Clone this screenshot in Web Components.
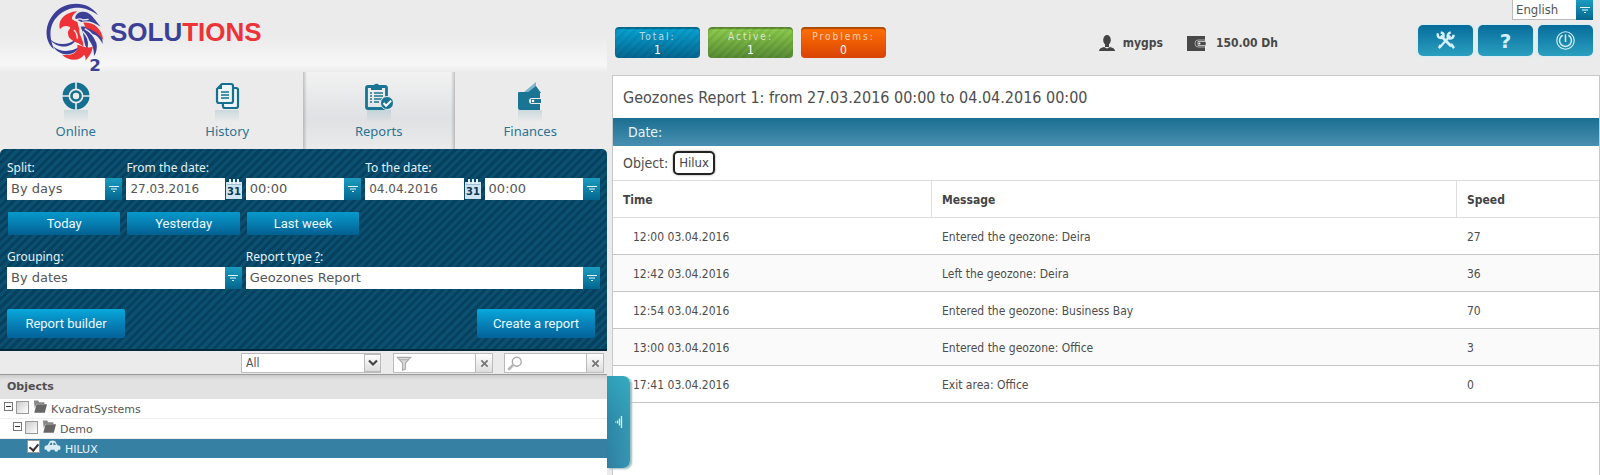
<!DOCTYPE html>
<html lang="en">
<head>
<meta charset="utf-8">
<title>Geozones Report</title>
<style>
html,body{margin:0;min-height:100%}
body{background:#ebebeb;font:12px/16px "DejaVu Sans Condensed","DejaVu Sans",sans-serif;color:#4d4d4d;
--label:"Noto Sans",sans-serif;--wide:"DejaVu Sans",sans-serif;--button:Roboto,sans-serif}
</style>
</head>
<body>
<tracker-app></tracker-app>
<script>
function define(name, html, setup) {
  const tpl = document.createElement('template');
  tpl.innerHTML = '<style>*{box-sizing:border-box}:host{box-sizing:border-box}</style>' + html;
  customElements.define(name, class extends HTMLElement {
    connectedCallback() {
      if (this.shadowRoot) return;
      this.attachShadow({mode: 'open'}).append(tpl.content.cloneNode(true));
      if (setup) setup(this, this.shadowRoot);
    }
  });
}

const ICONS = {
  online: ['0 0 28 28', '<g fill="none" stroke="#16708f"><circle cx="14" cy="14" r="10.5" stroke-width="6"/><circle cx="14" cy="14" r="4.5" stroke-width="2.6"/></g><path d="M14 0v8M14 20v8M0 14h8M20 14h8" stroke="#ebebeb" stroke-width="1.6"/>'],
  history: ['0 0 28 28', '<g fill="#eef6f8" stroke="#16708f" stroke-width="2.2" stroke-linejoin="round"><path d="M9 6h14q2 0 2 2v16q0 2-2 2H12q-2 0-2-2z"/><path d="M9 2h9q2 0 2 2v15q0 2-2 2H6q-2 0-2-2V7z"/></g><path d="M4 7h5V2" fill="#16708f"/><path d="M8 10h8M8 13h8M8 16h8" stroke="#16708f" stroke-width="1.6"/>'],
  reports: ['0 0 28 28', '<rect x="1.5" y="4.5" width="20" height="22" rx="1.5" fill="none" stroke="#1a7493" stroke-width="2.8"/><path d="M6 3h3a3 3 0 0 1 5 0h3v5H6z" fill="#1a7493"/><path d="M5 11h2M9 11h9M5 14h2M9 14h9M5 17h2M9 17h8M5 20h2M9 20h5" stroke="#1a7493" stroke-width="1.5"/><circle cx="22" cy="21" r="6.5" fill="#1a7493" stroke="#e7e9eb"/><path d="M18.5 21l2.6 2.7 5-5" fill="none" stroke="#fff" stroke-width="2"/>'],
  finances: ['0 0 28 28', '<path d="M8 10L20 0v10z" fill="#7fb3c9"/><path d="M11 11l9-7 5 7z" fill="#1a7493"/><path d="M3 10h21v6h-8q-3 0-3 3t3 3h8v6H4q-2 0-2-2V11q0-1 1-1z" fill="#1a7493"/><path d="M15 17h10v4H15z" fill="#1a7493"/><circle cx="17" cy="19" r="1.3" fill="#fff"/>'],
  calendar: ['0 0 16 21', '<path d="M0 4h16v17H0z" fill="#cfe4f0"/><path d="M4 1v5M8 1v5M12 1v5" stroke="#e8f4fa" stroke-width="2"/><path d="M1 6.5h14" stroke="#9cc0d4"/><text x="8" y="17" font-family="DejaVu Sans" font-weight="bold" font-size="10" text-anchor="middle" fill="#0c3a52">31</text>'],
  arrow: ['0 0 12 8', '<path d="M1 1.5h10M3 4h6M5 6.5h2" stroke="#e6f8ff" stroke-width="1.2"/>'],
  chevron: ['0 0 12 8', '<path d="M2 1.5l4 4 4-4" fill="none" stroke="#444" stroke-width="2.2"/>'],
  cross: ['0 0 10 10', '<path d="M1.5 1.5l7 7M8.5 1.5l-7 7" stroke="#777" stroke-width="2"/>'],
  filter: ['0 0 16 16', '<path d="M1 1.5h14l-5.5 6V14l-3 1V7.5z" fill="#ddd" stroke="#aaa" stroke-width="1.3"/><path d="M3 4h10" stroke="#aaa"/>'],
  search: ['0 0 18 16', '<circle cx="11" cy="6" r="5" fill="#fff" stroke="#aaa" stroke-width="1.6"/><path d="M7 9.5L1.5 15" stroke="#b5b5b5" stroke-width="3"/>'],
  folder: ['0 0 16 14', '<path d="M1 0h5l1 2h6v2H4L2 9z" fill="#888"/><path d="M4 4.5h12L13.5 14H1.5z" fill="#666"/>'],
  car: ['0 0 18 12', '<path d="M1 6l3-1 2-4q3-1.5 6 0l2 4 3 1q1 2 0 4h-2a2 2 0 0 1-4 0H7a2 2 0 0 1-4 0H1q-1-2 0-4z" fill="#d7ecf4"/><path d="M6 5l1-2.5h1.5V5zM10 5V2.5h1.5L12.5 5z" fill="#3580a3"/>'],
  user: ['0 0 16 16', '<ellipse cx="8" cy="5" rx="3.8" ry="5" fill="#444"/><path d="M6 9h4v3H6z" fill="#444"/><path d="M0 16q0-3 5-4l3 1.5L11 12q5 1 5 4z" fill="#444"/>'],
  purse: ['0 0 19 15', '<path d="M0 0h18v15H0z" fill="#484848"/><path d="M18 4h-7q-3 0-3 3.5T11 11h7" fill="none" stroke="#aaa"/><path d="M11 5.5h8v4h-8z" fill="#484848" stroke="#ddd" stroke-width=".8"/><circle cx="12.5" cy="7.5" r="1" fill="#fff"/>'],
  tools: ['0 0 20 20', '<g stroke="#d5f0fa" fill="none"><path d="M5 5l11 11" stroke-width="3"/><path d="M15 5L4 17" stroke-width="2.4"/><path d="M2 2.5q-1 4.5 3 5 3 0 3-3Q8 2 5 1.5" stroke-width="2.6"/><path d="M18.5 4q0 4-4 4-3-1-2-4 1-2 3-2.5" stroke-width="2.6"/></g><path d="M2 17l2-3 2 2-2 3zM14 14l3-1 3 4-2 2z" fill="#d5f0fa"/>'],
  power: ['0 0 20 20', '<circle cx="10" cy="10" r="9.2" fill="none" stroke="#d5f0fa" stroke-width="1.2"/><path d="M7 4.5a6.3 6.3 0 1 0 6 0M10 3.5v8" fill="none" stroke="#d5f0fa" stroke-width="1.6"/>'],
  handle: ['0 0 8 14', '<path d="M.5 6.5v1M2.5 5.5v3M4.5 3.5v7M6.5 1v12" stroke="#d9f2f8" stroke-width="1.3"/>']
};
define('ui-icon', '<style>:host{display:inline-block;flex:none}svg{display:block;width:100%;height:100%}</style><svg aria-hidden="true"></svg>', (el, r) => {
  const i = ICONS[el.getAttribute('name')], svg = r.querySelector('svg');
  svg.setAttribute('viewBox', i[0]);
  svg.innerHTML = i[1];
});

/* Puts the named icon in place of the component's <i data-icon> marker. */
function placeIcon(root, name) {
  const mark = root.querySelector('[data-icon]'), icon = document.createElement('ui-icon');
  icon.className = mark.className;
  icon.setAttribute('name', name);
  mark.replaceWith(icon);
}

define('brand-logo', `<style>
:host{display:flex;height:72px;padding-left:40px;background:linear-gradient(#ebebeb 50%,#f7f7f7 90%,#ececec)}
svg{width:70px;height:76px;flex:none}
strong{font:bold 26px/64px "Liberation Sans",sans-serif;color:#3b3f98}
em{font-style:normal;color:#ee3338}
</style>
<svg viewBox="0 0 210 228" role="img" aria-label="O2">
<g fill="#3b3f98">
<path d="M174 46C146 0 78 2 44 38C10 76 14 124 42 148C28 112 24 76 56 46C88 16 136 16 174 46Z"/>
<path d="M28 116C48 136 84 138 110 116C98 144 52 150 28 116Z"/>
<path d="M38 138C60 158 94 156 116 142C104 170 60 172 38 138Z"/>
<path d="M106 56C104 34 138 26 156 48L182 80C162 66 142 60 124 66Z"/>
<path d="M122 80C162 76 190 100 188 132C176 108 166 104 156 102C172 122 176 148 162 168C162 142 154 126 142 118C146 132 142 140 144 148C128 134 136 108 122 80Z"/>
</g>
<g fill="#ee3338">
<path d="M60 88C52 62 74 36 112 34C98 44 96 50 96 58L112 66L118 88C116 108 132 118 130 140C112 124 84 124 84 100C82 88 96 86 88 80C78 76 68 78 60 88Z"/>
<path d="M130 68C158 66 184 82 190 120C170 94 152 88 138 84Z"/>
<path d="M112 134C126 138 144 146 158 140C156 160 146 170 136 182C138 174 136 168 132 164C120 184 86 184 66 164C92 168 116 160 112 134Z"/>
</g>
<path d="M104 62q14-10 24-2l18-2" fill="none" stroke="#ededed" stroke-width="4"/>
<path d="M102 90q10 10 10 26M134 86q26 14 36 40M128 94q16 16 22 42" fill="none" stroke="#ededed" stroke-width="4"/>
<text x="148" y="214" font-family="DejaVu Sans" font-weight="bold" font-size="50" fill="#3b3f98">2</text>
</svg><strong>SOLU<em>TIONS</em></strong>`);

define('nav-tab', `<style>
:host{display:block;flex:1}
a{display:flex;flex-direction:column;align-items:center;height:77px;padding-top:10px;color:#2b7393;text-decoration:none;font:13px/18px var(--label)}
ui-icon{width:28px;height:28px}
b{width:24px;height:12px;background:linear-gradient(#16708f26,#16708f00)}
:host([active]) a{background:linear-gradient(90deg,#8887,#8880 4px calc(100% - 4px),#8887),linear-gradient(#f2f2f2,#dfe1e4 60%,#eaeaea)}
</style><a href="#"><i data-icon></i><b></b><slot></slot></a>`, (el, r) => placeIcon(r, el.getAttribute('icon')));

define('drop-down', `<style>
:host{display:grid;grid-template-columns:1fr 17px;height:22px;font:13px/20px var(--wide)}
select{grid-area:1/1/2/3;appearance:none;width:100%;height:100%;margin:0;border:0;border-radius:0;background:#fff;padding:0 20px 0 4px;color:#555;font:inherit;outline:0}
span{grid-area:1/2/2/3;display:grid;place-items:center;pointer-events:none;background:linear-gradient(#1b9cc0,#04668f)}
ui-icon{width:12px;height:8px}
:host([plain]){height:20px;font:12px/18px "DejaVu Sans Condensed",sans-serif}
:host([plain]) select{border:1px solid #bbb}
:host([plain]) span{margin:1px 0;border:1px solid #bbb;background:linear-gradient(#fff,#ddd)}
:host([lang-pick]){height:20px;font:13px/18px "DejaVu Sans Condensed",sans-serif}
:host([lang-pick]) select{border:1px solid #bbb;border-top:0;padding-left:3px}
</style><select><option></option></select><span><i data-icon></i></span>`, (el, r) => {
  const s = r.querySelector('select');
  s.setAttribute('aria-label', el.getAttribute('label'));
  s.options[0].textContent = el.getAttribute('value');
  placeIcon(r, el.hasAttribute('plain') ? 'chevron' : 'arrow');
});

define('date-field', `<style>
:host{display:flex;gap:1px;height:22px}
input{flex:1;min-width:0;border:0;padding:0 4px;font:12px/20px var(--wide);color:#555;background:#fff}
ui-icon{width:16px;height:21px}
</style><input type="text"><ui-icon name="calendar"></ui-icon>`, (el, r) => {
  const i = r.querySelector('input');
  i.value = el.getAttribute('value');
  i.setAttribute('aria-label', el.getAttribute('label'));
});

define('action-button', `<style>
:host{display:block}
button{display:block;width:100%;height:23px;border:0;border-radius:1px;padding:0;background:linear-gradient(#0699cb,#0680b3 45%,#035f91);color:#e9f9ff;font:13px/23px var(--button)}
:host([large]) button{height:29px;line-height:29px;background:linear-gradient(#08a9dc,#0782b8 50%,#03629a);border-radius:2px}
</style><button type="button"><slot></slot></button>`);

define('report-form', `<style>
:host{display:grid;grid-template-columns:repeat(5,minmax(0,1fr));column-gap:4px;padding:11px 7px;border-radius:5px 5px 0 0;color:#e4f2f8;font:12px/16px var(--label);
background:repeating-linear-gradient(135deg,#0b5070 0 3px,#06425f 3px 6px);border-bottom:2px solid #04293d}
span{height:18px}
.two{grid-column:span 2}.three{grid-column:span 3}
.quick{margin:12px 2px 14px 1px}
.foot{grid-column:1/-1;display:flex;justify-content:space-between;padding:20px 5px 0 0}
.foot action-button{width:118px}
a{color:inherit}
</style>
<span>Split:</span><span class="two">From the date:</span><span class="two">To the date:</span>
<drop-down label="Split" value="By days"></drop-down>
<date-field label="From the date" value="27.03.2016"></date-field>
<drop-down label="From time" value="00:00"></drop-down>
<date-field label="To the date" value="04.04.2016"></date-field>
<drop-down label="To time" value="00:00"></drop-down>
<action-button class="quick">Today</action-button><action-button class="quick">Yesterday</action-button><action-button class="quick">Last week</action-button><span class="two"></span>
<span class="two">Grouping:</span><span class="three">Report type <a href="#">?</a>:</span>
<drop-down class="two" label="Grouping" value="By dates"></drop-down>
<drop-down class="three" label="Report type" value="Geozones Report"></drop-down>
<div class="foot"><action-button large>Report builder</action-button><action-button large>Create a report</action-button></div>`);

define('clear-field', `<style>
:host{display:flex;align-items:center;height:20px;border:1px solid #bbb;background:#fff}
input{flex:1;min-width:0;border:0;padding:0;height:100%;background:none}
button{display:grid;place-items:center;width:17px;height:18px;padding:0;border:0;border-left:1px solid #bbb;background:linear-gradient(#fff,#ddd)}
button ui-icon{width:9px;height:9px}
</style><slot></slot><input type="text"><button type="button" aria-label="Clear"><ui-icon name="cross"></ui-icon></button>`, (el, r) => r.querySelector('input').setAttribute('aria-label', el.getAttribute('label')));

define('tree-row', `<style>
:host{display:flex;align-items:center;height:20px;border-bottom:1px solid #eee;background:#fff;color:#555;font:11px/18px var(--wide)}
b{width:9px;height:9px;border:1px solid #777;display:grid;place-items:center;margin:0 3px 4px 4px}
b::after{content:"";width:5px;height:1px;background:#333}
input{appearance:none;width:13px;height:13px;margin:0 4px 3px 0;border:1px solid #999;background:linear-gradient(135deg,#ccc,#fff);display:grid;place-items:center}
.k{width:14px;height:13px;margin:0 4px 5px 0}
span{padding-top:3px}
:host([level="1"]){padding-left:9px}
:host([level="2"]){padding-left:27px;height:19px;background:#3580a3;border-color:#3580a3;color:#e4f5fb}
:host([level="2"]) b{display:none}
:host([level="2"]) .k{width:17px;height:12px;margin-right:4px}
input:checked{background:#fff}
input:checked::after{content:"";width:4px;height:7px;border:solid #333;border-width:0 2px 2px 0;transform:rotate(40deg)}
</style><b></b><input type="checkbox" id="c"><i data-icon class="k"></i><span><label for="c"><slot></slot></label></span>`, (el, r) => {
  r.querySelector('input').checked = el.hasAttribute('checked');
  placeIcon(r, el.getAttribute('icon'));
});

define('object-panel', `<style>
:host{display:flex;flex-direction:column;flex:1}
.bar{display:flex;justify-content:flex-end;height:24px;padding:2px 3px 0 0;border-bottom:1px solid #999}
.bar drop-down{width:140px;margin-right:12px}
.bar clear-field{width:100px}
.bar clear-field + clear-field{margin-left:11px}
.g{width:16px;height:15px;margin-left:2px}
.list{position:relative;flex:1;min-height:100px;background:#fff}
h2{margin:0;padding:0 7px;height:24px;background:linear-gradient(#ccc,#e2e2e2 5px);font:bold 11px/24px var(--wide);color:#505050}
.handle{position:absolute;z-index:2;left:100%;top:1px;width:23px;height:92px;padding:0;border:0;border-radius:0 7px 7px 0;display:grid;place-items:center;background:linear-gradient(to left,#46bfcd55,#46bfcd00),linear-gradient(#2fa0b9,#2c87a6 50%,#2f7fa3);box-shadow:2px 1px 2px #9bb}
.handle ui-icon{width:8px;height:14px}
</style>
<div class="bar"><drop-down plain label="Group" value="All"></drop-down>
<clear-field label="Filter"><ui-icon class="g" name="filter"></ui-icon></clear-field>
<clear-field label="Search"><ui-icon class="g" name="search"></ui-icon></clear-field></div>
<div class="list"><h2>Objects</h2>
<tree-row icon="folder">KvadratSystems</tree-row>
<tree-row level="1" icon="folder">Demo</tree-row>
<tree-row level="2" checked icon="car">HILUX</tree-row>
<button class="handle" type="button" aria-label="Collapse"><ui-icon name="handle"></ui-icon></button></div>`);

define('count-badge', `<style>
:host{display:block;width:85px;height:31px;border-radius:4px;padding-top:3px;text-align:center;color:#fff;line-height:14px;box-shadow:inset 0 2px 1px #0005;
background:repeating-linear-gradient(135deg,#0000 0 3px,#00000010 3px 6px),linear-gradient(#08a6d6,#046791)}
small{display:block;font-size:10px;line-height:13px;letter-spacing:2px;opacity:.7}
:host([kind=active]){background:repeating-linear-gradient(135deg,#0000 0 3px,#00000010 3px 6px),linear-gradient(#8fd04e,#588b35)}
:host([kind=problem]){background:linear-gradient(#ff7200,#d94304)}
</style><small><slot name="label"></slot></small><slot></slot>`);

define('top-bar', `<style>
:host{display:flex;align-items:flex-start;height:75px;padding:0 7px 0 3px}
.counts{display:flex;gap:8px;padding-top:27px}
.who{display:flex;align-items:center;margin:34px 140px 0 auto;font-weight:bold;line-height:18px;color:#484848}
.u{width:16px;height:16px;margin-right:8px}.p{width:19px;height:15px;margin:0 10px 0 24px}
.side{display:flex;flex-direction:column;align-items:flex-end;gap:5px}
.side drop-down{width:81px}
nav{display:flex;gap:5px}
nav button{width:55px;height:31px;padding:0;border:0;border-radius:5px;display:grid;place-items:center;background:linear-gradient(#066c9b,#2ba0bf);box-shadow:0 0 2px 1px #d3eef6;color:#d5f0fa;font:bold 20px/28px var(--wide)}
nav ui-icon{width:19px;height:19px}
</style>
<div class="counts">
<count-badge><span slot="label">Total:</span>1</count-badge>
<count-badge kind="active"><span slot="label">Active:</span>1</count-badge>
<count-badge kind="problem"><span slot="label">Problems:</span>0</count-badge></div>
<div class="who"><ui-icon class="u" name="user"></ui-icon>mygps<ui-icon class="p" name="purse"></ui-icon>150.00 Dh</div>
<div class="side"><drop-down lang-pick label="Language" value="English"></drop-down>
<nav><button type="button" aria-label="Settings"><ui-icon name="tools"></ui-icon></button><button type="button">?</button><button type="button" aria-label="Log out"><ui-icon name="power"></ui-icon></button></nav></div>`);

define('report-view', `<style>
:host{display:block;flex:1;background:#fff;border:solid #c9c9c9;border-width:1px 1px 0}
h1{margin:0;padding:1px 10px 0;font-size:16px;font-weight:normal;line-height:41px}
.date{background:linear-gradient(#1b6f92,#488fb0);color:#e9f6fb;font-size:14px;line-height:28px;padding:0 15px}
.obj{display:flex;align-items:center;gap:5px;height:34px;padding:0 10px;font-size:14px;line-height:20px}
.obj a{border:2px solid #222;border-radius:5px;padding:0 4px;color:#444;text-decoration:none;font-size:13px;box-shadow:0 0 2px #777}
table{width:100%;border-collapse:separate;border-spacing:0;table-layout:fixed}
th,td{height:37px;padding:1px 10px 0;text-align:left;border-bottom:1px solid #c6c6c6}
th{border-top:1px solid #ddd;border-bottom-color:#ddd;color:#444;height:38px}
td+td{padding-left:11px}
th+th{border-left:1px solid #ddd}
td:first-child{padding-left:20px}
tr:nth-child(even) td{background:#fafafa}
.t{width:318px}.s{width:143px}
</style>
<h1>Geozones Report 1: from 27.03.2016 00:00 to 04.04.2016 00:00</h1>
<div class="date">Date:</div>
<div class="obj"><span>Object:</span><a href="#">Hilux</a></div>
<table><thead><tr><th class="t">Time</th><th>Message</th><th class="s">Speed</th></tr></thead><tbody>
<tr><td>12:00 03.04.2016</td><td>Entered the geozone: Deira</td><td>27</td></tr>
<tr><td>12:42 03.04.2016</td><td>Left the geozone: Deira</td><td>36</td></tr>
<tr><td>12:54 03.04.2016</td><td>Entered the geozone: Business Bay</td><td>70</td></tr>
<tr><td>13:00 03.04.2016</td><td>Entered the geozone: Office</td><td>3</td></tr>
<tr><td>17:41 03.04.2016</td><td>Exit area: Office</td><td>0</td></tr>
</tbody></table>`);

define('tracker-app', `<style>
:host{display:grid;grid-template-columns:minmax(0,607fr) minmax(0,993fr);min-height:100vh}
aside,main{display:flex;flex-direction:column}
main{margin-left:5px}
.tabs{display:flex;padding-right:1px}
</style>
<aside><brand-logo></brand-logo>
<nav class="tabs"><nav-tab icon="online">Online</nav-tab><nav-tab icon="history">History</nav-tab><nav-tab icon="reports" active>Reports</nav-tab><nav-tab icon="finances">Finances</nav-tab></nav>
<report-form></report-form>
<object-panel></object-panel></aside>
<main><top-bar></top-bar><report-view></report-view></main>`);
</script>
</body>
</html>
